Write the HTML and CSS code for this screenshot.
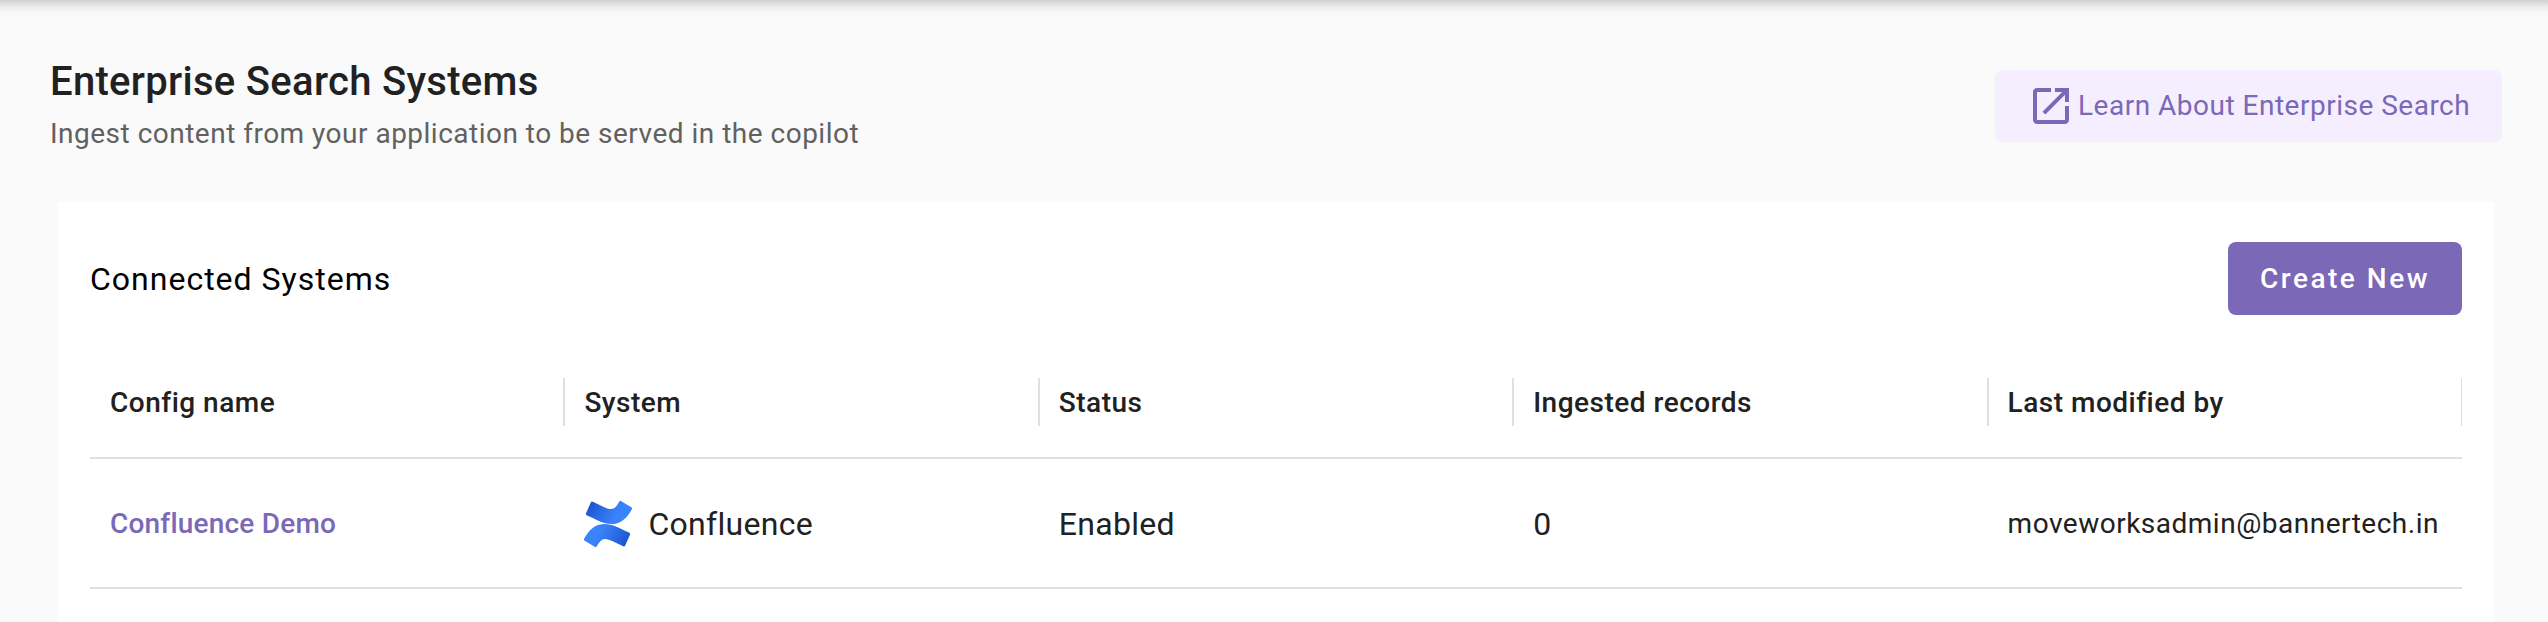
FILE: index.html
```html
<!DOCTYPE html>
<html lang="en">
<head>
<meta charset="utf-8">
<title>Enterprise Search Systems</title>
<link rel="stylesheet" href="styles.css">
</head>
<body>
<main class="page">
  <header class="page-header">
    <div class="heading">
      <h1 class="title">Enterprise Search Systems</h1>
      <p class="subtitle">Ingest content from your application to be served in the copilot</p>
    </div>
    <a class="learn-button">
      <svg class="learn-icon" viewBox="0 0 24 24" aria-hidden="true"><path fill="currentColor" d="M19 19H5V5h7V3H5c-1.110 0-2 .9-2 2v14c0 1.100.890 2 2 2h14c1.100 0 2-.9 2-2v-7h-2v7zM14 3v2h3.590l-9.830 9.830 1.410 1.410L19 6.410V10h2V3h-7z"/></svg>
      <span class="learn-label">Learn About Enterprise Search</span>
    </a>
  </header>
  <section class="card">
    <div class="card-header">
      <h2 class="card-title">Connected Systems</h2>
      <button class="create-button">Create New</button>
    </div>
    <div class="row row-head">
      <div class="cell">Config name</div>
      <div class="cell">System</div>
      <div class="cell">Status</div>
      <div class="cell">Ingested records</div>
      <div class="cell">Last modified by</div>
    </div>
    <div class="row">
      <div class="cell config-link">Confluence Demo</div>
      <div class="cell large system">
        <svg class="system-logo" viewBox="0 0 255.200 245.800" aria-hidden="true">
          <defs>
            <linearGradient id="wave" gradientUnits="userSpaceOnUse" x1="243" y1="261" x2="83" y2="169">
              <stop offset=".18" stop-color="#1f55d3"/>
              <stop offset="1" stop-color="#3984fb"/>
            </linearGradient>
            <path id="ribbon" d="M9.260 187.330c-2.640 4.310-5.610 9.310-8.130 13.290a8.130 8.130 0 0 0 2.720 11.040l52.910 32.550a8.130 8.130 0 0 0 11.260-2.760c2.120-3.540 4.840-8.130 7.810-13.050 20.940-34.570 42.010-30.340 79.990-12.200l52.460 24.940a8.130 8.130 0 0 0 10.930-4.070l25.190-56.980a8.130 8.130 0 0 0-4.060-10.650c-11.070-5.210-33.090-15.590-52.910-25.150C116.140 109.660 55.450 111.940 9.260 187.330z"/>
          </defs>
          <use href="#ribbon" fill="url(#wave)"/>
          <use href="#ribbon" fill="url(#wave)" transform="rotate(180 127.600 122.900)"/>
        </svg>
        <span>Confluence</span>
      </div>
      <div class="cell large">Enabled</div>
      <div class="cell large">0</div>
      <div class="cell">moveworksadmin@bannertech.in</div>
    </div>
  </section>
</main>
</body>
</html>
```
FILE: styles.css
```css
* { box-sizing: border-box; }

body {
  margin: 0;
  background: #fafafa;
  color: #212121;
  font-family: Roboto, "Liberation Sans", sans-serif;
}

.page {
  height: 622px;
  overflow: hidden;
  background: linear-gradient(#d0d0d0 0, #d9d9d9 2px, #e9e9e9 6px, #f5f5f5 11px, #fafafa 18px);
}

.page-header {
  display: flex;
  justify-content: space-between;
  align-items: flex-start;
  height: 202px;
  padding: 50px 46px 0 50px;
}

.title {
  margin: 0;
  font-size: 40px;
  line-height: 64px;
  font-weight: 500;
  letter-spacing: 0.3px;
}

.subtitle {
  margin: 0;
  font-size: 28px;
  line-height: 40px;
  letter-spacing: 0.49px;
  color: #616161;
}

.learn-button {
  display: flex;
  align-items: center;
  width: 507px;
  height: 72px;
  margin-top: 20px;
  padding: 0 0 0 32px;
  border-radius: 8px;
  background: #f4eeff;
  color: #7b68b7;
  font-size: 28px;
  letter-spacing: 0.5px;
  white-space: nowrap;
}

.learn-icon {
  flex: none;
  width: 48px;
  height: 48px;
  margin-right: 3px;
}

.learn-label { padding-bottom: 1px; }

.card {
  height: 420px;
  margin: 0 54px 0 58px;
  padding: 40px 32px 0;
  background: #fff;
}

.card-header {
  display: flex;
  justify-content: space-between;
  align-items: center;
  height: 73px;
  margin-bottom: 32px;
}

.card-title {
  margin: 0;
  font-size: 32px;
  font-weight: 400;
  letter-spacing: 1px;
  color: #000;
}

.create-button {
  width: 234px;
  height: 73px;
  padding: 0;
  border: 0;
  border-radius: 8px;
  background: #7b68b7;
  color: #fff;
  font: 500 28px Roboto, sans-serif;
  letter-spacing: 2.5px;
}

.row {
  display: grid;
  grid-template-columns: repeat(5, 1fr);
  align-items: center;
  height: 130px;
  border-bottom: 2px solid #e0e0e0;
}

.row-head {
  height: 112px;
  font-weight: 500;
}

.cell {
  padding-left: 20px;
  font-size: 28px;
  letter-spacing: 0.5px;
  white-space: nowrap;
}

.row-head .cell {
  height: 48px;
  margin-right: -1px;
  line-height: 49px;
  border-right: 2px solid #e0e0e0;
}

.row-head .cell:last-child {
  margin-right: 0;
  border-right-width: 1px;
}

.large {
  padding-top: 2px;
  font-size: 32px;
  letter-spacing: 0.3px;
}

.config-link {
  color: #7b68b7;
  font-weight: 500;
  letter-spacing: 0.2px;
}

.system {
  display: flex;
  align-items: center;
}

.system-logo {
  width: 48px;
  height: 48px;
  margin-right: 16px;
}
```
